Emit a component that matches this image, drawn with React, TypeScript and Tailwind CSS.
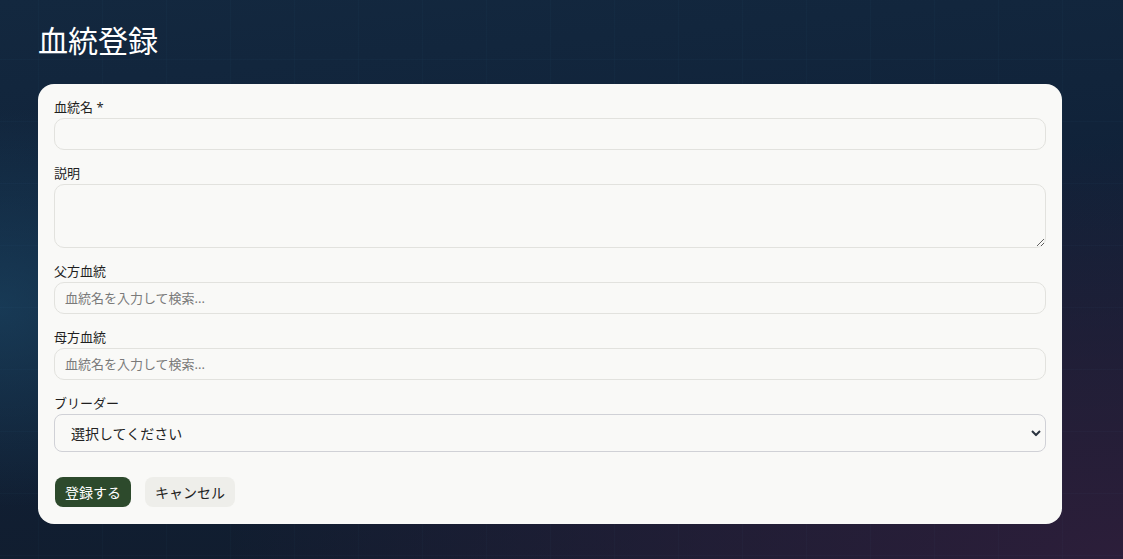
import React from "react";

const font = { fontFamily: '"Noto Sans", "Noto Sans CJK JP", sans-serif' };

function Field({ label, children }: { label: string; children: React.ReactNode }) {
  return (
    <div className="mb-4 flex flex-col">
      <label className="mb-1 block text-[13px] leading-[14px] text-[#1f1f1f]">{label}</label>
      {children}
    </div>
  );
}

const inputCls =
  "h-8 w-full rounded-[10px] border border-[#e2e2de] bg-[#f9f9f7] px-[10px] text-[13px] text-[#222] placeholder:text-[#7a7a7a] outline-none";

export default function App() {
  return (
    <div
      style={font}
      className="relative min-h-[559px] w-full overflow-hidden bg-[linear-gradient(175deg,#13283f_0%,#102239_40%,#111c2d_100%)]"
    >
      {/* soft teal glow on the left edge */}
      <div className="pointer-events-none absolute inset-0 bg-[radial-gradient(ellipse_260px_200px_at_0%_55%,rgba(30,78,110,0.55),transparent)]" />
      {/* purple haze, bottom right */}
      <div className="pointer-events-none absolute inset-0 bg-[radial-gradient(ellipse_900px_420px_at_100%_100%,rgba(44,30,58,1)_0%,rgba(44,30,58,0.6)_45%,transparent_100%)]" />
      {/* faint grid */}
      <div className="pointer-events-none absolute inset-0 bg-[linear-gradient(to_right,rgba(80,140,180,0.035)_1px,transparent_1px),linear-gradient(to_bottom,rgba(80,140,180,0.035)_1px,transparent_1px)] bg-[size:64px_62px] bg-[position:38px_59px]" />

      <div className="relative px-[38px] pt-[22px]">
        <h1 className="text-[30px] leading-[38px] font-normal text-white">血統登録</h1>

        <form className="mt-6 w-[1024px] rounded-2xl bg-[#f9f9f7] px-4 pt-4 pb-[17px]">
          <Field label="血統名 *">
            <input className={inputCls} />
          </Field>
          <Field label="説明">
            <textarea className="h-16 w-full rounded-[10px] border border-[#e2e2de] bg-[#f9f9f7] px-[10px] py-2 text-[13px] outline-none" />
          </Field>
          <Field label="父方血統">
            <input className={inputCls} placeholder="血統名を入力して検索..." />
          </Field>
          <Field label="母方血統">
            <input className={inputCls} placeholder="血統名を入力して検索..." />
          </Field>
          <Field label="ブリーダー">
            <div className="relative">
              <select className="h-[38px] w-full appearance-none rounded-[8px] border border-[#d0d1d6] bg-[#f9f9f7] pl-4 text-[14px] text-[#222] outline-none">
                <option>選択してください</option>
              </select>
              <svg
                className="pointer-events-none absolute top-1/2 right-[5px] -translate-y-1/2"
                width="10"
                height="7"
                viewBox="0 0 10 7"
              >
                <path d="M1 1.5 5 5.5 9 1.5" fill="none" stroke="#2b3440" strokeWidth="2" />
              </svg>
            </div>
          </Field>

          <div className="mt-[25px] flex gap-[14px] pl-px">
            <button
              type="button"
              className="h-[30px] rounded-[8px] bg-[#2d4a2c] px-[10px] text-[14px] text-white"
            >
              登録する
            </button>
            <button
              type="button"
              className="h-[30px] rounded-[8px] bg-[#eeeeea] px-[10px] text-[14px] text-[#222]"
            >
              キャンセル
            </button>
          </div>
        </form>
      </div>
    </div>
  );
}
